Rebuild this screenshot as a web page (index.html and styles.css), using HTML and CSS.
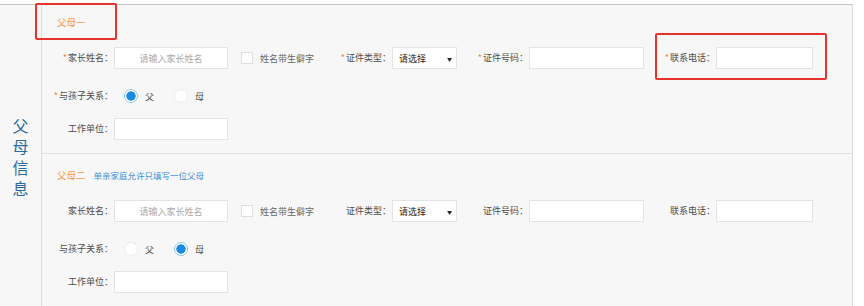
FILE: index.html
```html
<!DOCTYPE html>
<html lang="zh-CN">
<head>
<meta charset="utf-8">
<title>父母信息</title>
<link rel="stylesheet" href="styles.css">
</head>
<body>
<div class="panel">
  <div class="side"><div class="side-text">父母信息</div></div>
  <div class="main">
    <section class="group group-first">
      <div class="group-title"><span class="title">父母一</span></div>
      <div class="row">
        <label class="lbl"><span class="req">*</span>家长姓名：</label>
        <input class="inp inp-name" placeholder="请输入家长姓名">
        <div class="check"><span class="box"></span><span class="check-text">姓名带生僻字</span></div>
        <label class="lbl"><span class="req">*</span>证件类型：</label>
        <div class="select"><span>请选择</span><span class="arrow">▼</span></div>
        <label class="lbl"><span class="req">*</span>证件号码：</label>
        <input class="inp inp-id">
        <label class="lbl"><span class="req">*</span>联系电话：</label>
        <input class="inp inp-phone">
      </div>
      <div class="row">
        <label class="lbl"><span class="req">*</span>与孩子关系：</label>
        <div class="radios">
          <span class="radio on"></span><span class="radio-text">父</span>
          <span class="radio"></span><span class="radio-text">母</span>
        </div>
      </div>
      <div class="row row-last">
        <label class="lbl">工作单位：</label>
        <input class="inp inp-name">
      </div>
    </section>
    <section class="group group-second">
      <div class="group-title"><span class="title">父母二</span><span class="hint">单亲家庭允许只填写一位父母</span></div>
      <div class="row">
        <label class="lbl">家长姓名：</label>
        <input class="inp inp-name" placeholder="请输入家长姓名">
        <div class="check"><span class="box"></span><span class="check-text">姓名带生僻字</span></div>
        <label class="lbl">证件类型：</label>
        <div class="select"><span>请选择</span><span class="arrow">▼</span></div>
        <label class="lbl">证件号码：</label>
        <input class="inp inp-id">
        <label class="lbl">联系电话：</label>
        <input class="inp inp-phone">
      </div>
      <div class="row">
        <label class="lbl">与孩子关系：</label>
        <div class="radios">
          <span class="radio"></span><span class="radio-text">父</span>
          <span class="radio on"></span><span class="radio-text">母</span>
        </div>
      </div>
      <div class="row row-last">
        <label class="lbl">工作单位：</label>
        <input class="inp inp-name">
      </div>
    </section>
  </div>
  <div class="mark mark-title"></div>
  <div class="mark mark-phone"></div>
</div>
</body>
</html>
```

FILE: styles.css
```css
* { box-sizing: border-box; }
html, body { margin: 0; padding: 0; background: #fff; }
body {
  font-family: "Noto Sans CJK SC", "Noto Sans", sans-serif;
  font-size: 9px;
  color: #4d4d4d;
}
.panel {
  position: relative;
  margin-top: 4px;
  width: 853px;
  display: flex;
  border-top: 1px solid #c4c4c4;
  border-right: 1px solid #dcdcdc;
  background: #f7f7f7;
}
.side {
  width: 42px;
  flex: none;
  border-right: 1px solid #dcdcdc;
  display: flex;
  align-items: center;
  justify-content: center;
}
.side-text {
  width: 16px;
  font-size: 16px;
  line-height: 21px;
  color: #2f6c9c;
  padding-top: 2px;
}
.main { width: 810px; flex: none; }
.group-first { padding-top: 9px; padding-bottom: 13px; border-bottom: 1px solid #e2e2e2; }
.group-second { padding-top: 13px; padding-bottom: 13px; }
.group-title {
  height: 16px;
  line-height: 16px;
  padding-left: 15px;
  margin-bottom: 17px;
  display: flex;
  align-items: center;
}
.title { font-size: 9.5px; color: #f29b45; }
.hint { font-size: 8.5px; color: #3b8ed6; margin-left: 8px; }
.row {
  display: flex;
  align-items: center;
  height: 22px;
  margin-bottom: 16px;
}
.row + .row-last { margin-top: -5px; }
.row-last { margin-bottom: 0; }
.lbl {
  width: 72px;
  flex: none;
  text-align: right;
  white-space: nowrap;
  line-height: 22px;
  color: #4d4d4d;
  padding-right: 1px;
}
.req { color: #f07c4f; margin-right: 1px; }
.inp {
  height: 22px;
  border: 1px solid #e4e4e4;
  background: #fff;
  font-family: inherit;
  font-size: 9px;
  color: #333;
  padding: 0 6px;
  margin: 0;
  outline: none;
  flex: none;
}
.inp::placeholder { color: #a9a9a9; }
.inp-name { width: 114px; text-align: center; }
.inp-id { width: 115px; }
.inp-phone { width: 97px; }
.check {
  width: 92px;
  flex: none;
  display: flex;
  align-items: center;
  padding-left: 13px;
}
.box {
  width: 12px;
  height: 12px;
  background: #fff;
  border: 1px solid #dedede;
  margin-right: 7px;
  flex: none;
}
.check-text { color: #666; white-space: nowrap; }
.select {
  width: 65px;
  height: 22px;
  flex: none;
  background: #fff;
  border: 1px solid #e4e4e4;
  display: flex;
  align-items: center;
  justify-content: space-between;
  padding: 0 4px 0 6px;
  color: #222;
}
.arrow { font-size: 5px; color: #222; }
.radios {
  display: flex;
  align-items: center;
  padding-left: 10px;
}
.radio {
  width: 14px;
  height: 14px;
  border-radius: 50%;
  background: #fff;
  border: 1px solid #ececec;
  flex: none;
}
.radio.on {
  border: 1px solid #8cc6f2;
  background: radial-gradient(circle, #1a8ae2 0 4.4px, #fff 4.9px);
}
.radio-text { color: #4d4d4d; margin-left: 7px; margin-right: 20px; width: 9px; }
.mark {
  position: absolute;
  border: 2px solid #e8322d;
  border-radius: 2px;
  pointer-events: none;
}
.mark-title { left: 35px; top: -2px; width: 82px; height: 37px; }
.mark-phone { left: 655px; top: 28px; width: 172px; height: 47px; }
```
